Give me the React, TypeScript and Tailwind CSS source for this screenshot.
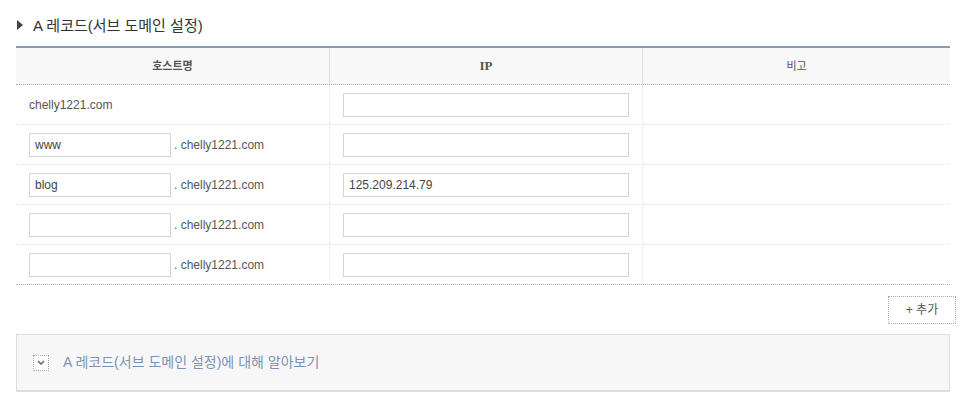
import React from 'react';

const domain = 'chelly1221.com';

const rows: { host: string | null; ip: string }[] = [
  { host: null, ip: '' },
  { host: 'www', ip: '' },
  { host: 'blog', ip: '125.209.214.79' },
  { host: '', ip: '' },
  { host: '', ip: '' },
];

const font = { fontFamily: '"Liberation Sans", "Noto Sans CJK KR", sans-serif' };

function Field({ value, className }: { value: string; className: string }) {
  return (
    <div
      className={`flex h-[24px] items-center border border-[#d5d5d5] bg-white px-[5px] text-[12px] text-[#444] ${className}`}
    >
      {value}
    </div>
  );
}

export default function App() {
  return (
    <div className="h-[398px] w-[966px] bg-white pt-[15px] text-[#444]" style={font}>
      <h2 className="flex h-[20px] items-center pl-[17px] text-[15px] font-normal leading-none text-[#333]">
        <svg width="6" height="10" viewBox="0 0 6 10" className="mr-[10px]">
          <path d="M0 0 L6 5 L0 10 Z" fill="#444" />
        </svg>
        A 레코드(서브 도메인 설정)
      </h2>

      <div className="mx-[16px] mt-[11px] border-t-2 border-[#8a9ab3]">
        <div className="grid h-[37px] grid-cols-[314px_313px_1fr] border-b border-dotted border-[#9fb0c8] bg-[#f8f8f8] text-[11px] font-bold text-[#555]">
          <div className="flex items-center justify-center border-r border-[#dcdcdc]">호스트명</div>
          <div
            className="flex items-center justify-center border-r border-[#dcdcdc] text-[13px]"
            style={{ fontFamily: '"Liberation Serif", serif' }}
          >
            IP
          </div>
          <div className="flex items-center justify-center font-normal">비고</div>
        </div>

        {rows.map((r, i) => (
          <div
            key={i}
            className={`grid h-[40px] grid-cols-[314px_313px_1fr] ${
              i === rows.length - 1 ? 'border-b border-dotted border-[#9fb0c8]' : 'border-b border-dotted border-[#e0e0e0]'
            }`}
          >
            <div className="flex items-center border-r border-dotted border-[#e0e0e0] pl-[13px] text-[12px] text-[#555]">
              {r.host === null ? (
                <span>{domain}</span>
              ) : (
                <>
                  <Field value={r.host} className="w-[142px]" />
                  <span className="ml-[3px]">. {domain}</span>
                </>
              )}
            </div>
            <div className="flex items-center border-r border-dotted border-[#e0e0e0] pl-[13px]">
              <Field value={r.ip} className="w-[286px]" />
            </div>
            <div />
          </div>
        ))}
      </div>

      <div className="mx-[10px] mt-[11px] flex justify-end">
        <button className="h-[28px] w-[68px] border border-dotted border-[#aaa] bg-white text-[12px] text-[#555]">
          + 추가
        </button>
      </div>

      <div className="mx-[16px] mt-[10px] flex h-[58px] items-center border border-[#ddd] border-b-2 bg-[#f7f7f7] pl-[16px]">
        <span className="flex h-[16px] w-[16px] items-center justify-center border border-dotted border-[#aaa] bg-white">
          <svg width="8" height="5" viewBox="0 0 8 5">
            <path d="M1 1 L4 4 L7 1" stroke="#666" strokeWidth="1.5" fill="none" />
          </svg>
        </span>
        <span className="ml-[14px] text-[14px] text-[#7b93b4]">A 레코드(서브 도메인 설정)에 대해 알아보기</span>
      </div>
    </div>
  );
}
